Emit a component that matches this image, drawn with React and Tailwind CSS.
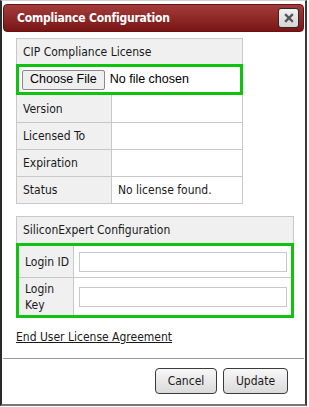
import React from "react";

const F = { fontFamily: '"DejaVu Sans Condensed", "DejaVu Sans", sans-serif' };

function LabelCell({ children, className = "" }) {
  return (
    <div className={"bg-[#f0f0f0] px-[6px] flex items-center text-[12px] text-[#1a1a1a] " + className}>
      {children}
    </div>
  );
}

export default function App() {
  return (
    <div className="w-[309px] h-[407px] bg-white">
      <div
        className="w-[307px] h-[406px] bg-white border-l-2 border-l-[#2a2a2a] border-r-2 border-r-[#3a3a3a] border-b-2 border-b-[#777] border-t border-t-[#d0d0d0] flex flex-col"
        style={F}
      >
        {/* Title bar */}
        <div className="mt-[3px] ml-[1px] mr-[1px] h-[28px] rounded-[4px] bg-gradient-to-b from-[#a23c3c] to-[#7a1414] flex items-center justify-between pl-[13px] pr-[4px] border border-[#6a1010]">
          <span className="text-white font-bold text-[12px] tracking-[-0.2px]">Compliance Configuration</span>
          <div className="w-[21px] h-[20px] rounded-[3px] border border-[#2a2a2a] bg-gradient-to-b from-[#f2f2f2] to-[#d4d4d4] flex items-center justify-center">
            <svg width="10" height="10" viewBox="0 0 10 10">
              <path d="M2 2 L8 8 M8 2 L2 8" stroke="#555" strokeWidth="2.4" strokeLinecap="square" />
            </svg>
          </div>
        </div>

        {/* Section 1 */}
        <div className="ml-[14px] mt-[6px] w-[227px] border border-[#c8c8c8]">
          <div className="h-[26px] bg-[#f0f0f0] flex items-center px-[6px] text-[12px] text-[#1a1a1a] border-b border-[#c8c8c8]">
            CIP Compliance License
          </div>
          <div className="h-[31px] border-[3px] border-[#11c311] -mx-[1px] -mt-[1px] flex items-center pl-[3px] gap-[5px]">
            <div
              className="h-[20px] px-[7px] rounded-[2px] border border-[#8a8a8a] bg-[#efefef] flex items-center text-[12.5px] text-black"
              style={{ fontFamily: '"Liberation Sans", Arial, sans-serif' }}
            >
              Choose File
            </div>
            <span className="text-[12.5px] text-black" style={{ fontFamily: '"Liberation Sans", Arial, sans-serif' }}>
              No file chosen
            </span>
          </div>
          {[
            ["Version", ""],
            ["Licensed To", ""],
            ["Expiration", ""],
            ["Status", "No license found."],
          ].map(([l, v], i) => (
            <div key={l} className={"flex h-[27px] " + (i > 0 ? "border-t border-[#c8c8c8]" : "")}>
              <LabelCell className="w-[95px] border-r border-[#c8c8c8]">{l}</LabelCell>
              <div className="flex-1 flex items-center px-[6px] text-[12px] text-[#1a1a1a]">{v}</div>
            </div>
          ))}
        </div>

        {/* Section 2 */}
        <div className="ml-[14px] mt-[12px] w-[278px] border border-[#c8c8c8]">
          <div className="h-[26px] bg-[#f0f0f0] flex items-center px-[6px] text-[12px] text-[#1a1a1a]">
            SiliconExpert Configuration
          </div>
          <div className="border-[3px] border-[#11c311] -mx-[1px] -mb-[1px]">
            <div className="flex h-[32px] border-b border-[#c8c8c8]">
              <LabelCell className="w-[55px] shrink-0 border-r border-[#c8c8c8] px-[3px] whitespace-nowrap">Login ID</LabelCell>
              <div className="flex-1 flex items-center pl-[5px] pr-[4px]">
                <div className="w-full h-[20px] border border-[#c8c8c8] bg-white" />
              </div>
            </div>
            <div className="flex h-[37px]">
              <LabelCell className="w-[55px] shrink-0 border-r border-[#c8c8c8] px-[3px] leading-[16px]">
                Login
                <br />
                Key
              </LabelCell>
              <div className="flex-1 flex items-center pl-[5px] pr-[4px]">
                <div className="w-full h-[20px] border border-[#c8c8c8] bg-white" />
              </div>
            </div>
          </div>
        </div>

        {/* Link */}
        <div className="ml-[14px] mt-[10px] text-[12px] text-[#1a1a1a] underline">End User License Agreement</div>

        {/* Separator */}
        <div className="mt-[12px] mx-[1px] border-t border-[#9a9a9a]" />

        {/* Buttons */}
        <div className="flex justify-end gap-[6px] mt-[9px] pr-[17px]">
          <div className="w-[62px] h-[26px] rounded-[4px] border border-[#3a3a3a] bg-gradient-to-b from-[#f7f7f7] to-[#dadada] flex items-center justify-center text-[12px] text-[#1a1a1a]">
            Cancel
          </div>
          <div className="w-[65px] h-[26px] rounded-[4px] border border-[#3a3a3a] bg-gradient-to-b from-[#f7f7f7] to-[#dadada] flex items-center justify-center text-[12px] text-[#1a1a1a]">
            Update
          </div>
        </div>
      </div>
    </div>
  );
}
